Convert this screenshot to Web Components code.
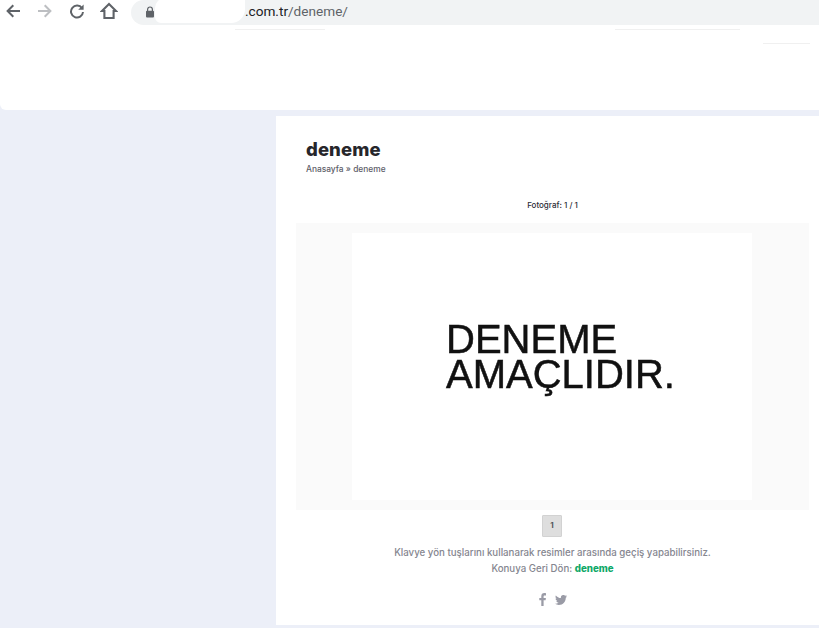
<!DOCTYPE html>
<html lang="tr">
<head>
<meta charset="utf-8">
<title>deneme</title>
<style>
  html, body { margin: 0; padding: 0; background: #eceff8; }
  body { width: 819px; height: 628px; overflow: hidden; font-family: "Inter", "Liberation Sans", sans-serif; }
</style>
</head>
<body>
<page-app>
  <browser-bar slot="bar" url-dark=".com.tr" url-light="/deneme/"></browser-bar>
  <site-header slot="header"></site-header>
  <gallery-card slot="card" heading="deneme" crumb="Anasayfa » deneme" counter="Fotoğraf: 1 / 1">
    <gallery-photo>DENEME<br>AMAÇLIDIR.</gallery-photo>
  </gallery-card>
</page-app>

<script>
// page-app.js
class PageApp extends HTMLElement {
  connectedCallback() {
    this._root = this.attachShadow({ mode: "open" });
    this._root.innerHTML = `
      <slot name="bar"></slot>
      <slot name="header"></slot>
      <div class="main">
        <div class="side"></div>
        <slot name="card"></slot>
      </div>
      <style>
        :host { display: block; width: 819px; height: 628px; }
        .main { display: flex; padding-top: 6px; }
        .side { width: 276px; flex: none; }
      </style>
    `;
  }
}
customElements.define("page-app", PageApp);

// browser-bar.js
class BrowserBar extends HTMLElement {
  connectedCallback() {
    var dark = this.getAttribute("url-dark");
    var light = this.getAttribute("url-light");
    this._root = this.attachShadow({ mode: "open" });
    this._root.innerHTML = `
      <div class="nav">
        <svg class="back" width="16" height="16" viewBox="0 0 16 16"><path d="M15 8H3M8.300 2.300 2.600 8l5.700 5.700" fill="none" stroke="#5f6368" stroke-width="2"/></svg>
        <svg class="fwd" width="16" height="16" viewBox="0 0 16 16"><path d="M1 8H13M7.700 2.300 13.400 8l-5.700 5.700" fill="none" stroke="#bdbfc2" stroke-width="2"/></svg>
        <svg class="reload" width="16" height="16" viewBox="0 0 16 16"><path d="M13 5.200A6 6 0 1 0 14 9" fill="none" stroke="#5f6368" stroke-width="2"/><path d="M14.600 1.400v5.400H9.200z" fill="#5f6368"/></svg>
        <svg class="home" width="18" height="18" viewBox="0 0 18 18"><path d="M9 2 2 9h2.400v7h9.200V9H16z" fill="none" stroke="#5f6368" stroke-width="2.100"/></svg>
      </div>
      <div class="omni">
        <svg class="lock" width="10" height="12" viewBox="0 0 10 12"><path d="M2.600 5V3.400a2.400 2.400 0 0 1 4.800 0V5" fill="none" stroke="#5f6368" stroke-width="1.200"/><rect x="1" y="4.800" width="8" height="6.600" rx="1" fill="#5f6368"/></svg>
        <div class="blank"></div>
        <div class="url"><span class="dark">${dark}</span><span class="light">${light}</span></div>
      </div>
      <style>
        :host { display: flex; height: 25px; background: #fff; }
        .nav { width: 131px; flex: none; display: flex; align-items: center; padding-left: 5px; box-sizing: border-box; padding-bottom: 3px; }
        svg { flex: none; display: block; }
        .fwd { margin-left: 16px; }
        .reload { margin-left: 16px; }
        .home { margin-left: 15px; }
        .omni { flex: 1; display: flex; align-items: center; background: #f1f3f4; border-radius: 13px 0 0 13px; padding-left: 14px; padding-bottom: 4px; box-sizing: border-box; overflow: hidden; }
        .lock { margin-top: 2px; }
        .blank { width: 90px; height: 25px; margin: -2px 0; background: #fff; flex: none; border-radius: 10px 0 14px 6px; }
        .url { font: 13.6px/18px "Roboto", "Liberation Sans", sans-serif; white-space: nowrap; }
        .dark { color: #202124; }
        .light { color: #5f6368; }
      </style>
    `;
  }
}
customElements.define("browser-bar", BrowserBar);

// site-header.js  (blanked-out header, only a few leftover hairlines)
class SiteHeader extends HTMLElement {
  connectedCallback() {
    this._root = this.attachShadow({ mode: "open" });
    this._root.innerHTML = `
      <i style="left:235px;top:4px;width:90px"></i>
      <i style="left:615px;top:4px;width:125px"></i>
      <i style="left:763px;top:18px;width:47px"></i>
      <style>
        :host { display: block; position: relative; height: 85px; background: #fff; border-radius: 0 0 0 6px; }
        i { position: absolute; height: 1px; background: #f0f0f0; }
      </style>
    `;
  }
}
customElements.define("site-header", SiteHeader);

// gallery-photo.js
class GalleryPhoto extends HTMLElement {
  connectedCallback() {
    this._root = this.attachShadow({ mode: "open" });
    this._root.innerHTML = `
      <div class="sheet"><div class="words"><slot></slot></div></div>
      <style>
        :host { display: flex; justify-content: center; background: #fafafa; padding: 10px 0; }
        .sheet { width: 400px; height: 267px; margin-right: 1px; background: #fff; padding: 89px 0 0 94px; box-sizing: border-box; }
        .words { font: 40px/35px "Liberation Sans", Arial, sans-serif; color: #111; -webkit-text-stroke: 0.5px #111; filter: blur(0.5px); white-space: nowrap; }
      </style>
    `;
  }
}
customElements.define("gallery-photo", GalleryPhoto);

// gallery-card.js
class GalleryCard extends HTMLElement {
  connectedCallback() {
    var heading = this.getAttribute("heading");
    var crumb = this.getAttribute("crumb");
    var counter = this.getAttribute("counter");
    this._root = this.attachShadow({ mode: "open" });
    this._root.innerHTML = `
      <div class="head">
        <h1>${heading}</h1>
        <p class="crumb">${crumb}</p>
      </div>
      <p class="counter">${counter}</p>
      <slot></slot>
      <div class="pager"><span>1</span></div>
      <p class="note">Klavye yön tuşlarını kullanarak resimler arasında geçiş yapabilirsiniz.</p>
      <p class="note back">Konuya Geri Dön: <a href="#">${heading}</a></p>
      <div class="social">
        <svg width="7" height="13" viewBox="0 0 7 13"><path d="M4.600 13V7.200h2l.3-2.300H4.600V3.500c0-.7.2-1.100 1.100-1.100H7V.3C6.800.2 6 .1 5.200.1 3.500.1 2.300 1.200 2.300 3.200v1.700H.3v2.300h2V13z" fill="#9a9ba6"/></svg>
        <svg width="12" height="10" viewBox="0 0 24 20"><path d="M24 2.400c-.9.400-1.800.7-2.800.8 1-.6 1.800-1.600 2.200-2.700-1 .6-2 1-3.100 1.200A4.900 4.900 0 0 0 11.900 6.200C7.800 6 4.200 4 1.700.9c-1.300 2.200-.6 5.100 1.500 6.500-.8 0-1.600-.2-2.200-.6 0 2.300 1.600 4.400 3.900 4.900-.7.200-1.500.2-2.200.1.600 2 2.400 3.400 4.600 3.400A9.900 9.900 0 0 1 0 17.700 14 14 0 0 0 7.500 20c9.100 0 14.300-7.700 14-14.600 1-.7 1.800-1.600 2.500-3z" fill="#9a9ba6"/></svg>
      </div>
      <style>
        :host { display: block; width: 543px; height: 509px; box-sizing: border-box; background: #fff; padding: 0 10px 0 20px; font-family: "Inter", "Liberation Sans", sans-serif; }
        .head { padding: 21px 0 0 10px; }
        h1 { margin: 0; font-size: 18.500px; line-height: 24px; font-weight: 800; color: #26262b; letter-spacing: 0.1px; }
        .crumb { margin: 2px 0 0; font-size: 8.400px; line-height: 13px; font-weight: 500; color: #5d5d68; }
        .counter { margin: 23px 0 0; height: 18px; font-size: 8px; line-height: 13px; font-weight: 500; color: #2c2c36; text-align: center; }
        ::slotted(gallery-photo) { margin-top: 6px; }
        .pager { display: flex; justify-content: center; margin-top: 5px; padding-right: 1px; }
        .pager span { width: 20px; height: 22px; box-sizing: border-box; background: #dedede; border: 1px solid #d2d2d2; border-radius: 1px; color: #55555c; font-size: 8px; font-weight: 700; line-height: 19px; text-align: center; }
        .note { margin: 8px 0 0; font-size: 9.700px; line-height: 16px; font-weight: 500; color: #85868f; text-align: center; white-space: nowrap; }
        .back { margin-top: 0; }
        a { color: #0fa868; font-weight: 800; text-decoration: none; }
        .social { display: flex; justify-content: center; align-items: center; gap: 9px; margin-top: 16px; }
      </style>
    `;
  }
}
customElements.define("gallery-card", GalleryCard);
</script>
</body>
</html>
